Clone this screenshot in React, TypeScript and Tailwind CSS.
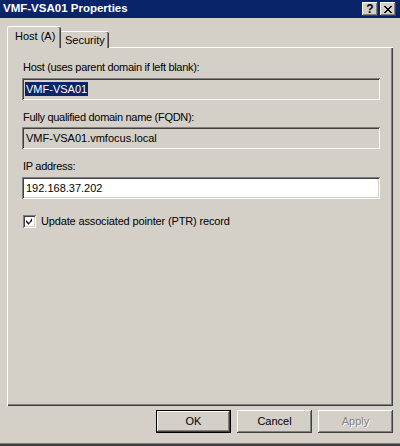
import React from "react";

const raised =
  "shadow-[inset_-1px_-1px_#404040,inset_1px_1px_#ffffff,inset_-2px_-2px_#808080,inset_2px_2px_#d4d0c8]";
const sunken =
  "shadow-[inset_1px_1px_#808080,inset_-1px_-1px_#ffffff,inset_2px_2px_#404040,inset_-2px_-2px_#d4d0c8]";

function Field(props: { label: string; value: string; disabled?: boolean; selected?: boolean; gap: string }) {
  return (
    <div className={"flex flex-col " + props.gap}>
      <div className="leading-[13px] pl-px tracking-[-0.3px]">{props.label}</div>
      <div
        className={
          "w-[358px] h-[22px] flex items-center pl-[3px] " +
          sunken +
          (props.disabled ? " bg-[#d4d0c8]" : " bg-white")
        }
      >
        {props.selected ? (
          <span className="bg-[#0a246a] text-white leading-[14px] px-px">{props.value}</span>
        ) : (
          <span className="leading-[14px] px-px">{props.value}</span>
        )}
      </div>
    </div>
  );
}

function Btn(props: { label: string; isDefault?: boolean; disabled?: boolean }) {
  const inner = (
    <div
      className={
        "h-full w-full flex items-center justify-center bg-[#d4d0c8] " +
        raised +
        (props.disabled ? " text-[#808080] [text-shadow:1px_1px_#ffffff]" : "")
      }
    >
      {props.label}
    </div>
  );
  if (props.isDefault) {
    return <div className="w-[75px] h-[23px] border border-black">{inner}</div>;
  }
  return <div className="w-[75px] h-[23px]">{inner}</div>;
}

export default function App() {
  return (
    <div className="w-[400px] h-[446px] bg-[#d4d0c8] flex flex-col text-[11px] text-black [font-family:'Liberation_Sans',Arial,sans-serif] overflow-hidden">
      {/* title bar */}
      <div className="h-[18px] bg-[#0a246a] flex items-center pl-[3px] pr-[4px]">
        <div className="text-white font-bold text-[11.5px] leading-none flex-1">VMF-VSA01 Properties</div>
        <div className="flex gap-[2px]">
          <div className={"w-[16px] h-[14px] bg-[#d4d0c8] flex items-center justify-center font-bold text-[12px] leading-none " + raised}>
            ?
          </div>
          <div className={"w-[16px] h-[14px] bg-[#d4d0c8] flex items-center justify-center " + raised}>
            <svg width="8" height="7" viewBox="0 0 8 7">
              <path d="M0 0h2v1H0zM1 1h2v1H1zM2 2h1v1H2zM6 0h2v1H6zM5 1h2v1H5zM5 2h1v1H5zM3 3h2v1H3zM2 4h1v1H2zM1 5h2v1H1zM0 6h2v1H0zM5 4h1v1H5zM5 5h2v1H5zM6 6h2v1H6zM3 2h2v1H3zM3 4h2v1H3z" fill="#000" />
            </svg>
          </div>
        </div>
      </div>

      {/* tabs */}
      <div className="flex items-end pl-[7px] mt-[8px] relative z-10 -mb-px">
        <div className="h-[22px] w-[54px] pl-[7px] pt-[3px] whitespace-nowrap bg-[#d4d0c8] border-l border-t border-white rounded-tl-[2px] rounded-tr-[2px] shadow-[inset_-1px_0_#404040,inset_-2px_0_#808080] leading-[13px]">
          Host (A)
        </div>
        <div className="h-[17px] w-[48px] pl-[4px] pt-[2px] whitespace-nowrap border-t border-white bg-[#d4d0c8] rounded-tr-[2px] shadow-[inset_-1px_0_#404040,inset_-2px_0_#808080] leading-[13px]">
          Security
        </div>
      </div>

      {/* panel */}
      <div className="ml-[7px] w-[386px] h-[359px] flex flex-col pl-[15px] pt-[14px] shadow-[inset_1px_1px_#ffffff,inset_-1px_-1px_#404040,inset_-2px_-2px_#808080]">
        <Field label="Host (uses parent domain if left blank):" value="VMF-VSA01" disabled selected gap="gap-[4px]" />
        <div className="mt-[11px]">
          <Field label="Fully qualified domain name (FQDN):" value="VMF-VSA01.vmfocus.local" disabled gap="gap-[3px]" />
        </div>
        <div className="mt-[11px]">
          <Field label="IP address:" value="192.168.37.202" gap="gap-[4px]" />
        </div>
        <div className="mt-[16px] flex items-center gap-[5px] pl-px">
          <div className={"w-[13px] h-[13px] bg-white flex items-center justify-center " + sunken}>
            <svg width="7" height="7" viewBox="0 0 7 7">
              <path d="M6 0v3L3 6v1L0 4V2l3 3z" fill="#000" />
            </svg>
          </div>
          <span className="leading-[13px] tracking-[-0.15px]">Update associated pointer (PTR) record</span>
        </div>
      </div>

      {/* buttons */}
      <div className="flex justify-end gap-[6px] pr-[7px] mt-[4px]">
        <Btn label="OK" isDefault />
        <Btn label="Cancel" />
        <Btn label="Apply" disabled />
      </div>

      <div className="mt-auto h-[3px] border-t border-[#808080] bg-[#404040]" />
    </div>
  );
}
